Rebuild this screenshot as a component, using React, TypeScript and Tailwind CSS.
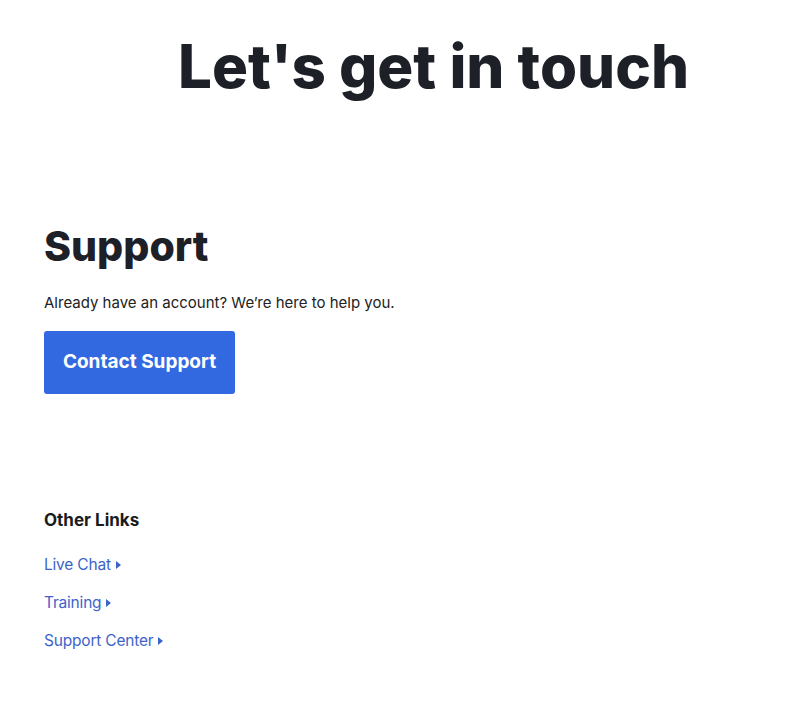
const links = ["Live Chat", "Training", "Support Center"];

function Caret() {
  return (
    <svg width="5" height="8" viewBox="0 0 5 8" className="ml-[5px] inline-block">
      <path d="M0 0 L5 4 L0 8 Z" fill="currentColor" />
    </svg>
  );
}

export default function App() {
  return (
    <div className="min-h-[710px] w-[810px] bg-white text-[#1e2027] [font-family:Inter,'Noto_Sans',sans-serif]">
      <header className="flex justify-center pl-[57px] pt-[26px]">
        <h1 className="text-[60px] leading-[80px] font-extrabold">Let's get in touch</h1>
      </header>

      <section className="px-[44px] pt-[114px]">
        <h2 className="text-[41px] leading-[52px] font-extrabold">Support</h2>
        <p className="mt-[19px] text-[15px] leading-[24px] text-[#222]">
          Already have an account? We’re here to help you.
        </p>
        <button className="mt-[16px] h-[63px] w-[191px] rounded-[3px] bg-[#3269e0] text-[19px] font-bold text-white">
          Contact Support
        </button>
      </section>

      <section className="px-[44px] pt-[114px]">
        <h3 className="text-[17px] leading-[24px] font-bold text-[#1b1b1b]">Other Links</h3>
        <ul className="mt-[21px] flex flex-col gap-[14px]">
          {links.map((l) => (
            <li key={l} className="flex items-center text-[15.5px] leading-[24px] tracking-[-0.2px] text-[#3d63c9]">
              {l}
              <Caret />
            </li>
          ))}
        </ul>
      </section>
    </div>
  );
}
